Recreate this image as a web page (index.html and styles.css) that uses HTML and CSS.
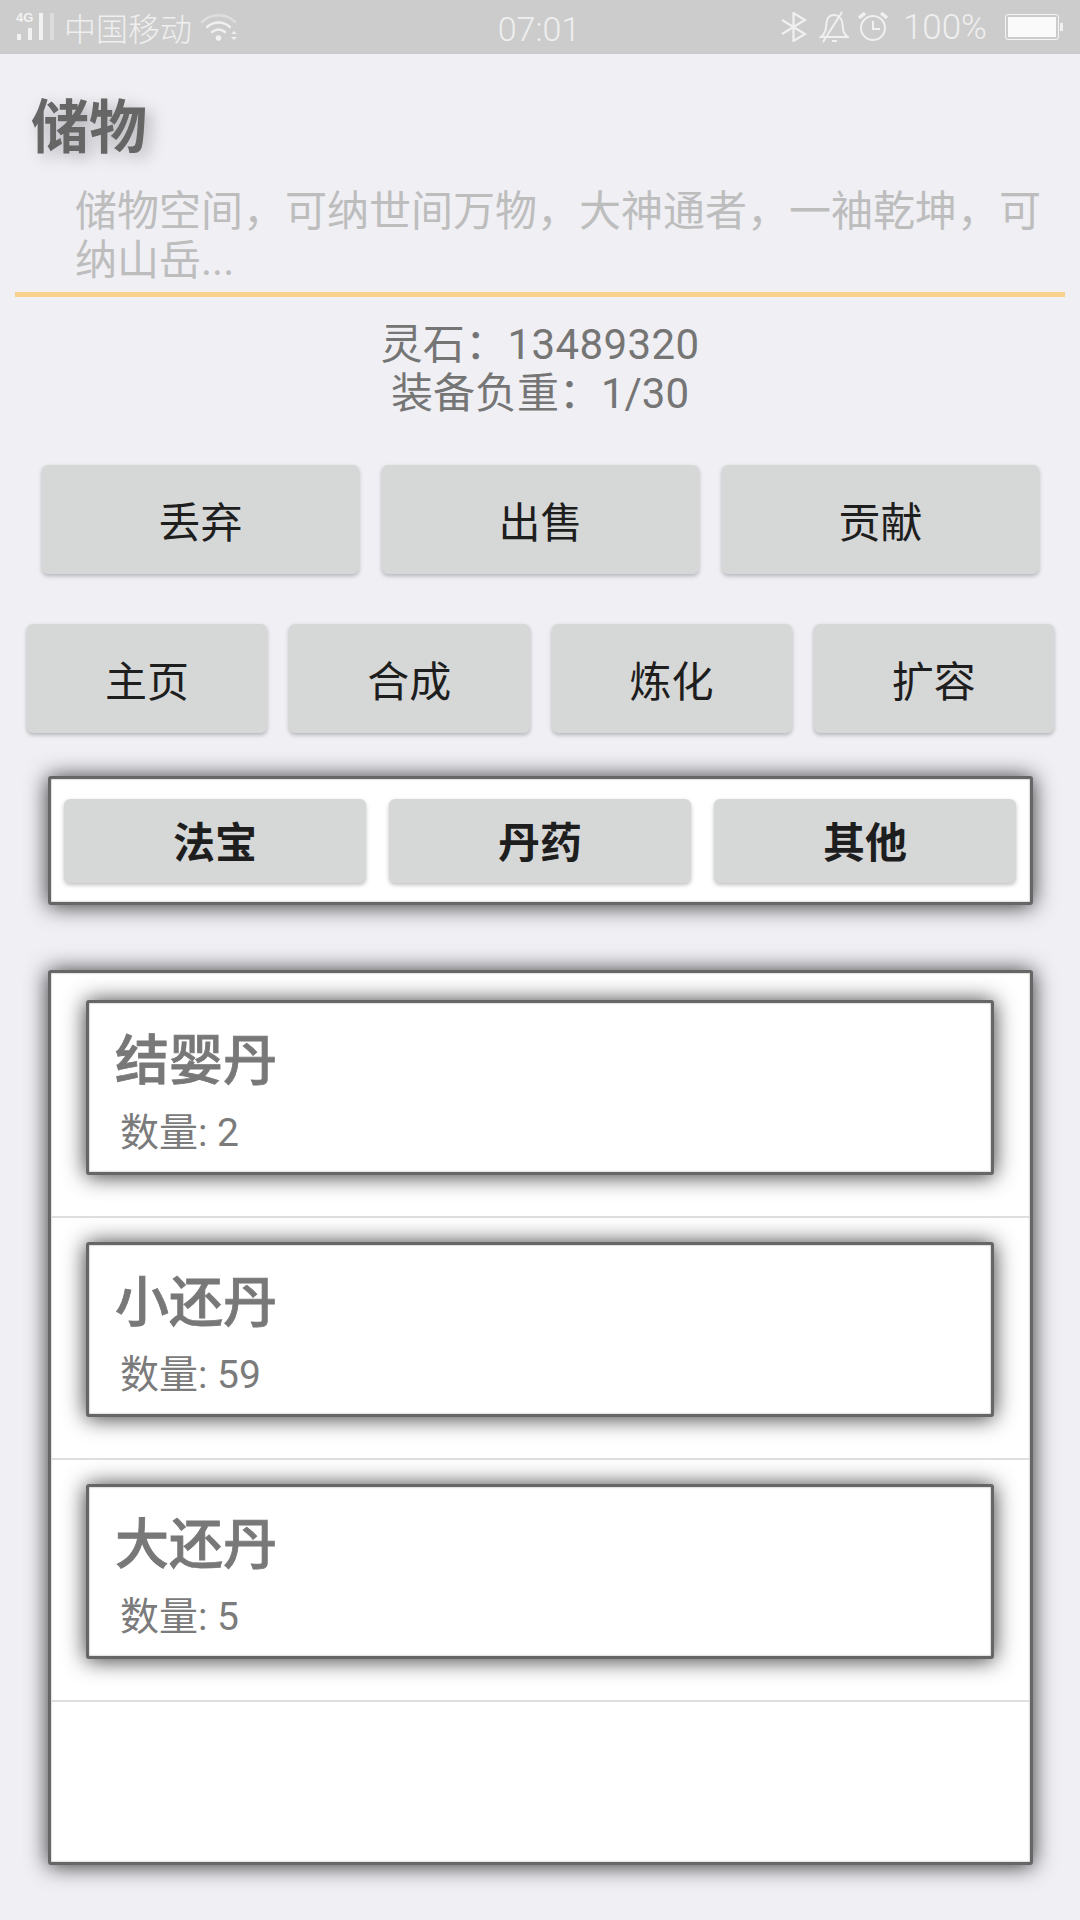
FILE: index.html
```html
<!DOCTYPE html>
<html lang="zh-CN">
<head>
    <meta charset="UTF-8">
    <meta name="viewport" content="width=device-width, initial-scale=1.0">
    <title>储物</title>
    <link rel="stylesheet" href="styles.css">
</head>
<body>
    <div class="status-bar">
        <div class="status-left">
            <svg class="signal" width="46" height="34" viewBox="0 0 46 34">
                <text x="1" y="12" class="signal-type">4G</text>
                <rect x="2" y="24" width="4" height="6" fill="#f2f2f2"/>
                <rect x="13" y="18" width="4" height="12" fill="#f2f2f2"/>
                <rect x="24" y="3" width="4" height="27" fill="#f2f2f2"/>
                <rect x="35" y="3" width="4" height="27" fill="#dcdcdc"/>
            </svg>
            <span class="carrier">中国移动</span>
            <svg class="wifi" width="40" height="34" viewBox="0 0 40 34" fill="none" stroke-linecap="round">
                <path d="M2 12 C11 3 26 3 35 12" stroke="#dedede" stroke-width="2.5"/>
                <path d="M7 17 C14 11 23 11 30 17" stroke="#f0f0f0" stroke-width="2.5"/>
                <path d="M12 22 C16 19 21 19 25 22" stroke="#f0f0f0" stroke-width="2.5"/>
                <circle cx="18.5" cy="28" r="2.8" fill="#f2f2f2" stroke="none"/>
                <path d="M31 24 L34 21 L37 24 Z M31 27 L37 27 L34 30 Z" fill="#f0f0f0" stroke="none"/>
            </svg>
        </div>
        <div class="status-time">07:01</div>
        <div class="status-right">
            <svg width="26" height="30" viewBox="0 0 26 30" fill="none" stroke="#f0f0f0" stroke-width="2.2">
                <path d="M1 8 L24 22 L12.5 29 L12.5 1 L24 8 L1 22"/>
            </svg>
            <svg class="bell" width="30" height="32" viewBox="0 0 30 32" fill="none" stroke="#f0f0f0" stroke-width="2">
                <path d="M2 26 C7 22 7 17 7.500 12 C8 7 11 4 15 4 C20 4 23 8 23.500 13 C24 18 24 23 29 26 Z"/>
                <path d="M4 31 L23 1"/>
                <path d="M13 30 L18 30"/>
            </svg>
            <svg class="alarm" width="30" height="32" viewBox="0 0 30 32" fill="none" stroke="#f0f0f0" stroke-width="2">
                <circle cx="15" cy="17" r="12"/>
                <path d="M15 10 L15 18 L22 18"/>
                <path d="M1 7 L7 2 M29 7 L23 2" stroke-width="3.500"/>
            </svg>
            <span class="battery-text">100%</span>
            <div class="battery"><div class="battery-fill"></div></div>
            <div class="battery-tip"></div>
        </div>
    </div>

    <div class="header">
        <h1 class="title">储物</h1>
        <p class="desc">储物空间，可纳世间万物，大神通者，一袖乾坤，可纳山岳...</p>
    </div>

    <div class="stats">
        <div class="stones">灵石：13489320</div>
        <div>装备负重：1/30</div>
    </div>

    <div class="btn-row actions">
        <button class="btn">丢弃</button>
        <button class="btn">出售</button>
        <button class="btn">贡献</button>
    </div>

    <div class="btn-row nav">
        <button class="btn">主页</button>
        <button class="btn">合成</button>
        <button class="btn">炼化</button>
        <button class="btn">扩容</button>
    </div>

    <div class="panel tabs">
        <button class="btn tab">法宝</button>
        <button class="btn tab">丹药</button>
        <button class="btn tab">其他</button>
    </div>

    <div class="panel list">
        <div class="list-item">
            <div class="card">
                <div class="card-name">结婴丹</div>
                <div class="card-count">数量: 2</div>
            </div>
        </div>
        <div class="list-item">
            <div class="card">
                <div class="card-name">小还丹</div>
                <div class="card-count">数量: 59</div>
            </div>
        </div>
        <div class="list-item">
            <div class="card">
                <div class="card-name">大还丹</div>
                <div class="card-count">数量: 5</div>
            </div>
        </div>
    </div>
</body>
</html>
```

FILE: styles.css
```css
* {
    box-sizing: border-box;
}
body {
    margin: 0;
    width: 1080px;
    height: 1920px;
    overflow: hidden;
    background-color: #efeff4;
    font-family: Roboto, "Noto Sans CJK SC", sans-serif;
    color: #757575;
}

/* status bar */
.status-bar {
    display: grid;
    grid-template-columns: 1fr auto 1fr;
    align-items: center;
    height: 54px;
    padding: 0 17px 0 15px;
    background-color: #cccccc;
    color: #efefef;
    font-size: 32px;
}
.status-left {
    display: flex;
    align-items: center;
}
.carrier {
    margin-left: 3px;
    font-weight: 300;
}
.wifi {
    margin-left: 8px;
}
.signal-type {
    font-family: "Liberation Sans", sans-serif;
    font-size: 13px;
    font-weight: bold;
    fill: #f2f2f2;
}
.status-time {
    padding-top: 3px;
    font-size: 34px;
    font-weight: 300;
}
.status-right {
    display: flex;
    align-items: center;
    justify-content: flex-end;
}
.bell {
    margin-left: 12px;
}
.alarm {
    margin-left: 9px;
}
.battery-text {
    margin-left: 15px;
    font-size: 35px;
    font-weight: 300;
}
.battery {
    width: 54px;
    height: 26px;
    margin-left: 18px;
    padding: 2px;
    border: 1px solid #f4f4f4;
    border-radius: 3px;
}
.battery-fill {
    height: 100%;
    background-color: #fafafa;
}
.battery-tip {
    width: 3px;
    height: 8px;
    margin-left: 1px;
    background-color: #f0f0f0;
}

/* header */
.header {
    margin: 0 15px;
    height: 243px;
    border-bottom: 5px solid #f8d28c;
}
.title {
    margin: 0;
    padding: 39px 0 0 16px;
    font-size: 58px;
    line-height: 70px;
    font-weight: bold;
    color: #666666;
    text-shadow: 6px 5px 16px rgba(0, 0, 0, 0.25);
}
.desc {
    margin: 24px 20px 0 60px;
    font-size: 42px;
    line-height: 49px;
    color: #bdbdbd;
}

.stats {
    margin-top: 23px;
    font-size: 42px;
    line-height: 49px;
    text-align: center;
}
.stones {
    letter-spacing: 0.4px;
}

/* buttons */
.btn-row {
    display: flex;
}
.btn {
    flex: 1;
    height: 109px;
    padding: 0;
    border: none;
    border-radius: 6px;
    background-color: #d6d7d7;
    color: #1e1e1e;
    font-family: inherit;
    font-size: 42px;
    box-shadow: 0 2px 4px rgba(0, 0, 0, 0.25);
}
.actions {
    gap: 23px;
    margin: 47px 41px 0 42px;
}
.nav {
    gap: 22px;
    margin: 50px 26px 0 27px;
}

/* bordered panels */
.panel {
    margin: 0 47px 0 48px;
    border: 3px solid #666666;
    border-radius: 3px;
    background-color: #ffffff;
    box-shadow: 0 1px 22px rgba(0, 0, 0, 0.8), inset 0 0 2px rgba(0, 0, 0, 0.4);
}
.tabs {
    display: flex;
    gap: 23px;
    height: 129px;
    margin-top: 43px;
    padding: 20px 14px 20px 13px;
}
.tab {
    height: 84px;
    padding-bottom: 4px;
    font-weight: bold;
}
.list {
    height: 895px;
    margin-top: 65px;
    padding-top: 3px;
}
.list-item {
    height: 242px;
    padding: 24px 36px 0 35px;
    border-bottom: 2px solid #dedede;
}
.card {
    height: 175px;
    padding: 29px 26px 0;
    border: 3px solid #666666;
    border-radius: 3px;
    background-color: #ffffff;
    box-shadow: 0 1px 22px rgba(0, 0, 0, 0.8), inset 0 0 2px rgba(0, 0, 0, 0.4);
}
.card-name {
    font-size: 54px;
    line-height: 60px;
    font-weight: 500;
    color: #787878;
    -webkit-text-stroke: 0.8px #787878;
}
.card-count {
    margin: 19px 0 0 5px;
    font-size: 39px;
    line-height: 44px;
    color: #7b7b7b;
}
```
